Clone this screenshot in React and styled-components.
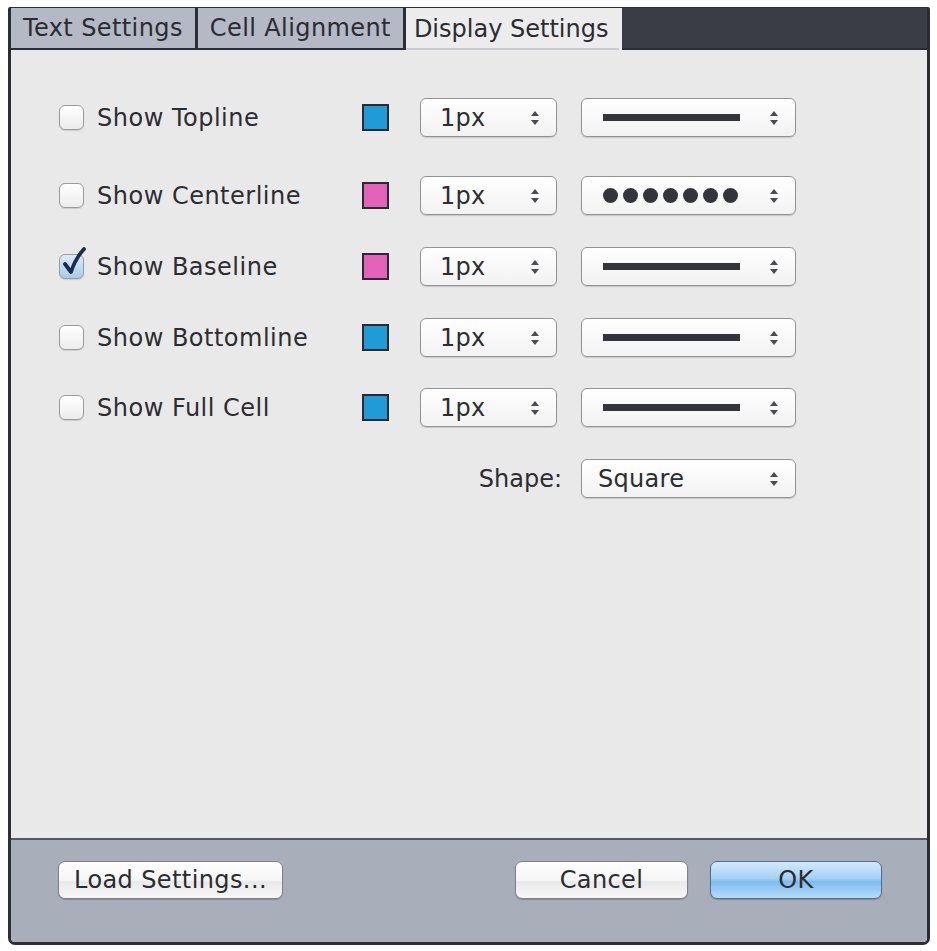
import React from "react";
import styled, { createGlobalStyle } from "styled-components";

const GlobalStyle = createGlobalStyle`
  html, body {
    margin: 0;
    padding: 0;
    background: #ffffff;
  }
  body {
    font-family: "DejaVu Sans", "Liberation Sans", sans-serif;
    color: #2f3033;
  }
`;

const Window = styled.div`
  box-sizing: border-box;
  margin: 7px 0 0 8px;
  width: 922px;
  height: 938px;
  display: flex;
  flex-direction: column;
  border: 3px solid #2c2e35;
  border-top-width: 1px;
  border-radius: 2px 2px 7px 7px;
  overflow: hidden;
`;

const TabBar = styled.div`
  display: flex;
  height: 40px;
  background: #3a3d46;
  border-bottom: 2px solid #2c2e35;
`;

const Tab = styled.div`
  display: flex;
  align-items: center;
  padding: 0 ${(p) => (p.active ? "11px 0 8px" : "12px 0 12px")};
  font-size: 24px;
  letter-spacing: ${(p) => (p.active ? "0" : "0.4px")};
  border-right: 3px solid ${(p) => (p.active ? "transparent" : "#2c2e35")};
  background: ${(p) => (p.active ? "#ececec" : "#b4b9c5")};
  color: #2a2c32;
  margin-bottom: ${(p) => (p.active ? "-2px" : "0")};
  box-shadow: ${(p) => (p.active ? "inset 0 -2px 0 #c9cbce" : "none")};
`;

const Content = styled.div`
  flex: 1;
  background: #e9e9e9;
  padding: 48px 0 0 48px;
  display: flex;
  flex-direction: column;
`;

const Row = styled.div`
  display: grid;
  grid-template-columns: 303px 58px 161px 214px;
  height: 39px;
  align-items: center;
  margin-top: ${(p) => p.top}px;
`;

const CheckCell = styled.label`
  display: flex;
  align-items: center;
  gap: 13px;
  font-size: 24px;
  letter-spacing: 0.5px;
  color: #2c2d31;
`;

const Box = styled.span`
  position: relative;
  flex-shrink: 0;
  box-sizing: border-box;
  width: 25px;
  height: 25px;
  border-radius: 6px;
  border: 1px solid #9b9b9b;
  background: ${(p) =>
    p.checked
      ? "linear-gradient(#dcecf8, #a9cbe6)"
      : "linear-gradient(#ffffff, #ececec)"};
  box-shadow: 0 1px 1px rgba(0, 0, 0, 0.12);
  svg {
    position: absolute;
    left: 1px;
    top: -8px;
  }
`;

const Swatch = styled.span`
  box-sizing: border-box;
  width: 27px;
  height: 27px;
  border: 2px solid #2b2a33;
  background: ${(p) => p.color};
`;

const SelectBox = styled.div`
  box-sizing: border-box;
  width: ${(p) => p.width}px;
  height: 39px;
  display: flex;
  align-items: center;
  padding: 0 16px 0 ${(p) => p.pad}px;
  border: 1px solid #939393;
  border-radius: 6px;
  background: linear-gradient(#ffffff, #f2f2f2);
  box-shadow: 0 1px 1px rgba(0, 0, 0, 0.15);
  font-size: 24px;
  letter-spacing: 0.3px;
  color: #2c2d31;
`;

const SelectValue = styled.span`
  flex: 1;
  display: flex;
  align-items: center;
`;

const SolidLine = styled.span`
  width: 137px;
  height: 7px;
  background: #33353a;
`;

const Dots = styled.span`
  display: flex;
  gap: 5px;
  span {
    width: 15px;
    height: 15px;
    border-radius: 50%;
    background: #33353a;
  }
`;

const ShapeLabel = styled.span`
  grid-column: 3;
  justify-self: end;
  padding-right: 19px;
  font-size: 24px;
  color: #2c2d31;
`;

const ShapeSelect = styled.div`
  grid-column: 4;
`;

const Footer = styled.div`
  height: 104px;
  box-sizing: border-box;
  border-top: 2px solid #55575e;
  background: #a9afba;
  display: flex;
  align-items: flex-start;
  padding: 21px 45px 0 47px;
`;

const Button = styled.button`
  box-sizing: border-box;
  width: ${(p) => p.width}px;
  height: 38px;
  border-radius: 7px;
  font-family: "DejaVu Sans", "Liberation Sans", sans-serif;
  font-size: 24px;
  letter-spacing: 0.4px;
  color: #2a2c32;
  border: 1px solid ${(p) => (p.primary ? "#4f6f96" : "#7e8188")};
  background: ${(p) =>
    p.primary
      ? "linear-gradient(#d2e9fb 0%, #a6d1f4 45%, #7dbcee 55%, #b6dcf8 100%)"
      : "linear-gradient(#ffffff 0%, #f6f6f6 50%, #e9e9e9 55%, #f7f7f7 100%)"};
  box-shadow: 0 1px 1px rgba(0, 0, 0, 0.2);
  margin-left: ${(p) => p.gap || 0}px;
  padding: 0;
`;

const Spacer = styled.div`
  flex: 1;
`;

function Arrows() {
  return (
    <svg width="10" height="16" viewBox="0 0 10 16">
      <path d="M5 1 L9 6 L1 6 Z" fill="#4a4b50" />
      <path d="M5 15 L9 10 L1 10 Z" fill="#4a4b50" />
    </svg>
  );
}

function Select({ width, pad = 19, children }) {
  return (
    <SelectBox width={width} pad={pad}>
      <SelectValue>{children}</SelectValue>
      <Arrows />
    </SelectBox>
  );
}

function Checkbox({ checked }) {
  return (
    <Box checked={checked}>
      {checked && (
        <svg width="26" height="30" viewBox="0 0 26 30">
          <path
            d="M4 17 L10 25 Q14 12 23 2"
            fill="none"
            stroke="#1b2c4f"
            strokeWidth="3.8"
            strokeLinecap="round"
            strokeLinejoin="round"
          />
        </svg>
      )}
    </Box>
  );
}

const rows = [
  { label: "Show Topline", color: "#1f9bd7", style: "solid", top: 0 },
  { label: "Show Centerline", color: "#e462b9", style: "dots", top: 39 },
  { label: "Show Baseline", color: "#e462b9", style: "solid", checked: true, top: 32 },
  { label: "Show Bottomline", color: "#1f9bd7", style: "solid", top: 32 },
  { label: "Show Full Cell", color: "#1f9bd7", style: "solid", top: 31 },
];

export default function App() {
  return (
    <>
      <GlobalStyle />
      <Window>
        <TabBar>
          <Tab>Text Settings</Tab>
          <Tab>Cell Alignment</Tab>
          <Tab active>Display Settings</Tab>
        </TabBar>
        <Content>
          {rows.map((r) => (
            <Row key={r.label} top={r.top}>
              <CheckCell>
                <Checkbox checked={r.checked} />
                {r.label}
              </CheckCell>
              <Swatch color={r.color} />
              <Select width={137}>1px</Select>
              <Select width={215} pad={21}>
                {r.style === "dots" ? (
                  <Dots>
                    {Array.from({ length: 7 }).map((_, k) => (
                      <span key={k} />
                    ))}
                  </Dots>
                ) : (
                  <SolidLine />
                )}
              </Select>
            </Row>
          ))}
          <Row top={32}>
            <ShapeLabel>Shape:</ShapeLabel>
            <ShapeSelect>
              <Select width={215} pad={16}>Square</Select>
            </ShapeSelect>
          </Row>
        </Content>
        <Footer>
          <Button width={225}>Load Settings...</Button>
          <Spacer />
          <Button width={173}>Cancel</Button>
          <Button width={172} gap={22} primary>
            OK
          </Button>
        </Footer>
      </Window>
    </>
  );
}
